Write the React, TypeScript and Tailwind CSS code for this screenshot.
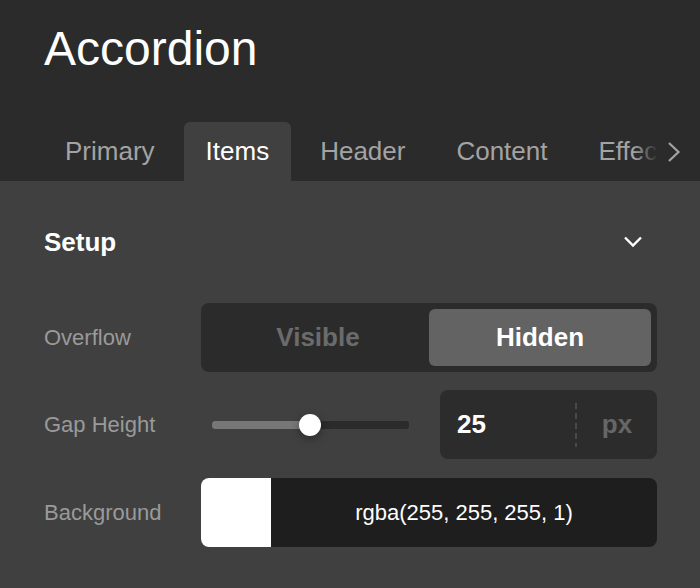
import React from "react";

const font = { fontFamily: '"Liberation Sans", Arial, sans-serif' };

function Tab({ label, active }: { label: string; active?: boolean }) {
  return (
    <div
      className={
        "flex h-[59px] shrink-0 items-center rounded-t-[6px] px-[22px] text-[26px] " +
        (active ? "bg-[#404040] text-white" : "text-[#a3a3a3]")
      }
    >
      {label}
    </div>
  );
}

function Label({ children }: { children: React.ReactNode }) {
  return <div className="w-[157px] shrink-0 text-[22px] text-[#9a9a9a]">{children}</div>;
}

export default function App() {
  return (
    <div className="h-[588px] w-[700px] overflow-hidden bg-[#404040]" style={font}>
      {/* Header */}
      <div className="bg-[#2b2b2b] pt-[25px]">
        <div className="pl-[44px] text-[48px] leading-none text-white">Accordion</div>
        <div className="relative mt-[49px] h-[59px]">
          <div className="flex h-full gap-[7px] overflow-hidden pl-[43px]">
            <Tab label="Primary" />
            <Tab label="Items" active />
            <Tab label="Header" />
            <Tab label="Content" />
            <Tab label="Effects" />
          </div>
          <div className="absolute right-0 top-0 flex h-full w-[66px]">
            <div className="h-full w-[24px] bg-gradient-to-r from-[#2b2b2b00] to-[#2b2b2b]" />
            <div className="flex h-full flex-1 items-center bg-[#2b2b2b] pl-[9px]">
              <svg width="14" height="22" viewBox="0 0 14 22" fill="none">
                <path d="M2 2 L11.5 11 L2 20" stroke="#a3a3a3" strokeWidth="2.2" />
              </svg>
            </div>
          </div>
        </div>
      </div>

      {/* Body */}
      <div className="px-[44px] pr-[43px] pt-[36px]">
        <div className="flex h-[50px] items-center justify-between">
          <div className="text-[26px] font-bold text-white">Setup</div>
          <svg className="mr-[14px]" width="20" height="12" viewBox="0 0 20 12" fill="none">
            <path d="M2 1.5 L10 9.5 L18 1.5" stroke="#ffffff" strokeWidth="2.4" />
          </svg>
        </div>

        {/* Overflow */}
        <div className="mt-[36px] flex h-[69px] items-center">
          <Label>Overflow</Label>
          <div className="grid h-full flex-1 grid-cols-2 rounded-[8px] bg-[#2b2b2b] p-[6px]">
            <div className="flex items-center justify-center text-[26px] font-bold text-[#6b6b6b]">Visible</div>
            <div className="flex items-center justify-center rounded-[6px] bg-[#636363] text-[26px] font-bold text-white">
              Hidden
            </div>
          </div>
        </div>

        {/* Gap Height */}
        <div className="mt-[18px] flex h-[69px] items-center">
          <Label>Gap Height</Label>
          <div className="flex h-full flex-1 items-center">
            <div className="relative ml-[11px] h-[8px] w-[197px] rounded-[3px] bg-[#2b2b2b]">
              <div className="h-full w-[98px] rounded-l-[3px] bg-[#777777]" />
              <div className="absolute left-[87px] top-[-7px] h-[22px] w-[22px] rounded-full bg-white shadow-[0_3px_8px_rgba(0,0,0,0.35)]" />
            </div>
          </div>
          <div className="flex h-full w-[217px] items-center rounded-[8px] bg-[#2c2c2c]">
            <div className="flex-1 pl-[17px] text-[26px] font-bold text-white">25</div>
            <svg width="2" height="44" viewBox="0 0 2 44">
              <line x1="1" y1="0" x2="1" y2="44" stroke="#4a4a4a" strokeWidth="2" strokeDasharray="6 4" />
            </svg>
            <div className="w-[80px] text-center text-[26px] font-bold text-[#666666]">px</div>
          </div>
        </div>

        {/* Background */}
        <div className="mt-[19px] flex h-[69px] items-center">
          <Label>Background</Label>
          <div className="flex h-full flex-1 overflow-hidden rounded-[8px] bg-[#1e1e1e]">
            <div className="h-full w-[70px] bg-white" />
            <div className="flex flex-1 items-center justify-center text-[22px] text-white">
              rgba(255, 255, 255, 1)
            </div>
          </div>
        </div>
      </div>
    </div>
  );
}
